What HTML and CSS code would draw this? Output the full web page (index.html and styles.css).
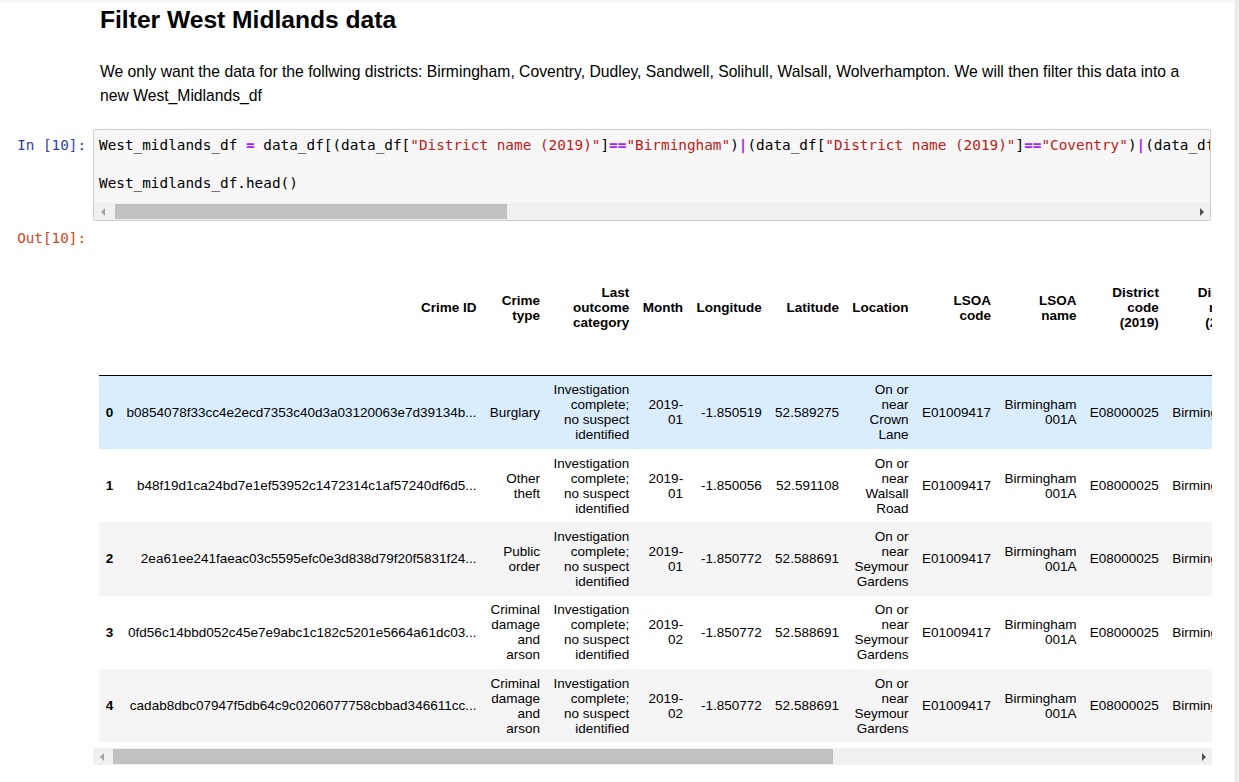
FILE: index.html
```html
<!DOCTYPE html>
<html lang="en">
<head>
<meta charset="utf-8">
<title>Filter West Midlands data</title>
<link rel="stylesheet" href="styles.css">
</head>
<body>
<div class="nb">
  <div class="cell md-cell">
    <div class="prompt"></div>
    <div class="md">
      <h2 class="md-h2">Filter West Midlands data</h2>
      <p class="md-p">We only want the data for the follwing districts: Birmingham, Coventry, Dudley, Sandwell, Solihull, Walsall, Wolverhampton. We will then filter this data into a new West_Midlands_df</p>
    </div>
  </div>

  <div class="cell code-cell">
    <div class="prompt in-prompt">In&nbsp;[10]:</div>
    <div class="input-area">
<pre class="code">West_midlands_df <span class="op">=</span> data_df[(data_df[<span class="str">"District name (2019)"</span>]<span class="op">==</span><span class="str">"Birmingham"</span>)<span class="op">|</span>(data_df[<span class="str">"District name (2019)"</span>]<span class="op">==</span><span class="str">"Coventry"</span>)<span class="op">|</span>(data_df[<span class="str">"District name (2019)"</span>]<span class="op">==</span><span class="str">"Dudley"</span>)<span class="op">|</span>(data_df[<span class="str">"District name (2019)"</span>]<span class="op">==</span><span class="str">"Sandwell"</span>)<span class="op">|</span>(data_df[<span class="str">"District name (2019)"</span>]<span class="op">==</span><span class="str">"Solihull"</span>)<span class="op">|</span>(data_df[<span class="str">"District name (2019)"</span>]<span class="op">==</span><span class="str">"Walsall"</span>)<span class="op">|</span>(data_df[<span class="str">"District name (2019)"</span>]<span class="op">==</span><span class="str">"Wolverhampton"</span>)]

West_midlands_df.head()</pre>
      <div class="hscroll code-scroll">
        <span class="sb-btn sb-left"></span>
        <div class="sb-track"><div class="sb-thumb code-thumb"></div></div>
        <span class="sb-btn sb-right"></span>
      </div>
    </div>
  </div>

  <div class="cell out-cell">
    <div class="prompt out-prompt">Out[10]:</div>
    <div class="output">
      <div class="table-clip">
        <table class="df">
          <thead>
            <tr>
              <th></th>
              <th>Crime ID</th>
              <th>Crime type</th>
              <th>Last outcome category</th>
              <th>Month</th>
              <th>Longitude</th>
              <th>Latitude</th>
              <th>Location</th>
              <th>LSOA code</th>
              <th>LSOA name</th>
              <th>District code (2019)</th>
              <th>District name (2019)</th>
            </tr>
          </thead>
          <tbody>
            <tr class="row-hover">
              <th>0</th>
              <td>b0854078f33cc4e2ecd7353c40d3a03120063e7d39134b...</td>
              <td>Burglary</td>
              <td>Investigation complete; no suspect identified</td>
              <td>2019-<wbr>01</td>
              <td>-1.850519</td>
              <td>52.589275</td>
              <td>On or near Crown Lane</td>
              <td>E01009417</td>
              <td>Birmingham 001A</td>
              <td>E08000025</td>
              <td>Birmingham</td>
            </tr>
            <tr>
              <th>1</th>
              <td>b48f19d1ca24bd7e1ef53952c1472314c1af57240df6d5...</td>
              <td>Other theft</td>
              <td>Investigation complete; no suspect identified</td>
              <td>2019-<wbr>01</td>
              <td>-1.850056</td>
              <td>52.591108</td>
              <td>On or near Walsall Road</td>
              <td>E01009417</td>
              <td>Birmingham 001A</td>
              <td>E08000025</td>
              <td>Birmingham</td>
            </tr>
            <tr>
              <th>2</th>
              <td>2ea61ee241faeac03c5595efc0e3d838d79f20f5831f24...</td>
              <td>Public order</td>
              <td>Investigation complete; no suspect identified</td>
              <td>2019-<wbr>01</td>
              <td>-1.850772</td>
              <td>52.588691</td>
              <td>On or near Seymour Gardens</td>
              <td>E01009417</td>
              <td>Birmingham 001A</td>
              <td>E08000025</td>
              <td>Birmingham</td>
            </tr>
            <tr>
              <th>3</th>
              <td>0fd56c14bbd052c45e7e9abc1c182c5201e5664a61dc03...</td>
              <td>Criminal damage and arson</td>
              <td>Investigation complete; no suspect identified</td>
              <td>2019-<wbr>02</td>
              <td>-1.850772</td>
              <td>52.588691</td>
              <td>On or near Seymour Gardens</td>
              <td>E01009417</td>
              <td>Birmingham 001A</td>
              <td>E08000025</td>
              <td>Birmingham</td>
            </tr>
            <tr>
              <th>4</th>
              <td>cadab8dbc07947f5db64c9c0206077758cbbad346611cc...</td>
              <td>Criminal damage and arson</td>
              <td>Investigation complete; no suspect identified</td>
              <td>2019-<wbr>02</td>
              <td>-1.850772</td>
              <td>52.588691</td>
              <td>On or near Seymour Gardens</td>
              <td>E01009417</td>
              <td>Birmingham 001A</td>
              <td>E08000025</td>
              <td>Birmingham</td>
            </tr>
          </tbody>
        </table>
      </div>
      <div class="hscroll out-scroll">
        <span class="sb-btn sb-left"></span>
        <div class="sb-track"><div class="sb-thumb out-thumb"></div></div>
        <span class="sb-btn sb-right"></span>
      </div>
    </div>
  </div>
</div>
</body>
</html>
```

FILE: styles.css
```css
html, body {
  margin: 0;
  padding: 0;
}

body {
  background: #eeeeee;
  font-family: "Liberation Sans", Arial, sans-serif;
  color: #000;
}

.nb {
  width: 1211px;
  padding-right: 24px;
  min-height: 782px;
  background: linear-gradient(#f2f2f2, #ffffff 4px);
  border-right: 1px solid #e2e2e2;
}

.cell {
  display: flex;
}

.prompt {
  width: 93px;
  flex: none;
  box-sizing: border-box;
  padding-right: 7px;
  text-align: right;
  font-family: "DejaVu Sans Mono", "Liberation Mono", monospace;
  font-size: 14.3px;
  line-height: 19px;
  white-space: nowrap;
}

.md {
  flex: 1;
  min-width: 0;
  padding: 0 6px 0 7px;
}

.md-h2 {
  margin: 0;
  padding-top: 5px;
  font-size: 24.6px;
  line-height: 29px;
  font-weight: bold;
}

.md-p {
  margin: 26px 0 0;
  font-size: 15.7px;
  line-height: 24px;
}

.code-cell {
  margin-top: 21px;
}

.in-prompt {
  color: #303F9F;
  padding-top: 6.5px;
}

.input-area {
  flex: 1;
  min-width: 0;
  border: 1px solid #cfcfcf;
  border-radius: 2px;
  background: #f7f7f7;
  overflow: hidden;
}

.code {
  margin: 0;
  padding: 5.5px 0 10.5px 5px;
  font-family: "DejaVu Sans Mono", "Liberation Mono", monospace;
  font-size: 14.37px;
  line-height: 19px;
  white-space: pre;
  overflow: hidden;
  color: #000;
}

.op {
  color: #AA22FF;
  font-weight: bold;
}

.str {
  color: #BA2121;
}

.hscroll {
  display: flex;
  height: 17px;
  background: #f1f1f1;
}

.sb-btn {
  width: 17px;
  flex: none;
  display: flex;
  align-items: center;
  justify-content: center;
}

.sb-btn::before {
  content: "";
  border-top: 4px solid transparent;
  border-bottom: 4px solid transparent;
}

.sb-left::before {
  border-right: 4px solid #a3a3a3;
}

.sb-right::before {
  border-left: 4px solid #505050;
}

.sb-track {
  flex: 1;
  display: flex;
  align-items: center;
}

.sb-thumb {
  height: 15px;
  background: #c1c1c1;
}

.code-thumb {
  margin-left: 4px;
  width: 392px;
}

.out-cell {
  margin-top: 1px;
}

.out-prompt {
  color: #D84315;
  padding-top: 6.5px;
}

.output {
  flex: none;
  width: 1119px;
}

.out-thumb {
  margin-left: 3px;
  width: 720px;
}

.table-clip {
  overflow: hidden;
  padding: 19px 0 6px 6px;
}

.df {
  border-collapse: collapse;
  border: none;
  font-size: 13.5px;
  line-height: 15px;
  color: #000;
}

.df th,
.df td {
  padding: 6.7px;
  text-align: right;
  vertical-align: middle;
  white-space: normal;
  border: none;
}

.df th {
  font-weight: bold;
}

.df thead {
  border-bottom: 1px solid #000;
}

.df thead tr {
  height: 134px;
  background: #fff;
}

.df tbody tr {
  background: #fff;
}

.df tbody tr:nth-child(odd) {
  background: #f5f5f5;
}

.df tbody tr.row-hover {
  background: #d9edfd;
}
```
